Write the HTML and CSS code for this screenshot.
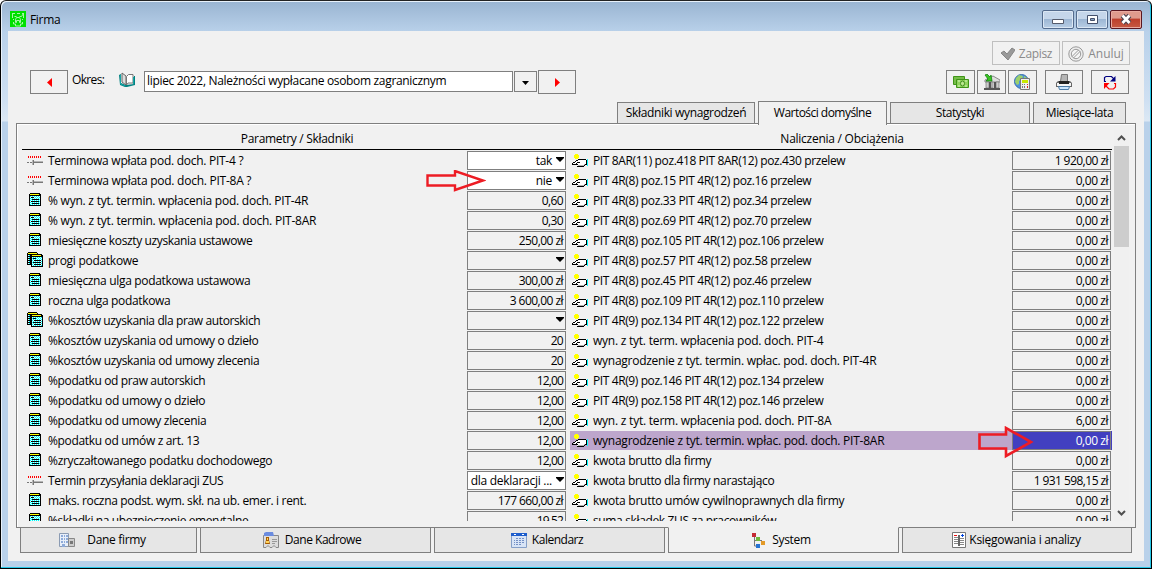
FILE: index.html
```html
<!DOCTYPE html>
<html lang="pl">
<head>
<meta charset="utf-8">
<title>Firma</title>
<link rel="stylesheet" href="styles.css">
</head>
<body>
<svg class="defs" width="0" height="0">
  <defs>
    <pattern id="dots" width="2" height="2" patternUnits="userSpaceOnUse"><path fill="#0ff" d="M0 0h2v2H0z"/><path fill="#d8ffff" d="M0 0h1v1H0zM1 1h1v1H1z"/></pattern>
    <symbol id="i-switch" viewBox="0 0 16 16"><path fill="#f00" d="M1 4h1v2H1zM3 4h1v2H3zM5 4h1v2H5zM7 4h1v2H7zM9 4h1v2H9zM11 4h1v2h-1zM13 4h1v2h-1z"/><path fill="#777" d="M0 10h2v1H0zM3 10h2v1H3zM6 8h1v5H6zM7 10h9v1H7z"/><path fill="#b5b5b5" d="M5 8h1v5H5zM7 9h9v1H7z"/></symbol>
    <symbol id="i-note" viewBox="0 0 16 16"><path d="M3 1h10v1h1v12H2V2h1z"/><path fill="#ff0" d="M3 2h9v1H3z"/><path fill="url(#dots)" d="M3 4h10v9H3z"/><path d="M4 5h3v1H4zM5 7h7v1H5zM4 9h8v1H4zM5 11h7v1H5z"/></symbol>
    <symbol id="i-notes" viewBox="0 0 16 16"><path d="M1 0h9l1 2h4l1 2v11H4v-2H0V1z"/><path fill="#ff0" d="M1 1h9v1H1zM5 3h9v1H5z"/><path fill="url(#dots)" d="M1 3h2v9H1zM5 5h10v9H5z"/><path d="M1 4h2v1H1zM1 6h2v1H1zM1 8h2v1H1zM1 10h2v1H1zM6 6h3v1H6zM7 8h7v1H7zM6 10h8v1H6zM7 12h7v1H7z"/></symbol>
    <symbol id="i-hand" viewBox="0 0 16 16"><path fill="#ff0" d="M3 2h3v1h1v3H6v1H3V6H2V3h1z"/><path fill="#fff" d="M6 8h8v4l-2 2H5v-1H1v-1l4-4z"/><path d="M6 7h8v1H6zM4 8h2v1H4zM3 9h1v1H3zM1 10h2v1H1zM0 11h1v2H0zM1 12h5v1H1zM5 10h3v1H5zM4 11h1v1H4zM5 14h7v1H5zM12 13h1v1h-1zM13 12h1v1h-1zM14 8h1v5h-1z"/><path fill="#b0b0b0" d="M6 13h6v1H6zM12 12h1v1h-1z"/><path fill="#0ff" d="M15 7h1v7h-1z"/></symbol>
  </defs>
</svg>

<div class="window">
  <header class="titlebar">
    <svg class="app-icon" width="16" height="16" viewBox="0 0 16 16"><path fill="#00e000" d="M0 0h16v16H0z"/><g fill="none" stroke="#a8f5a8"><path d="M2 2.500h3M7 2.500h3M12 2.500h2M2.500 3v4M13.500 3v4M4.500 5.500h2M9.500 5.500h2l2-3M5.500 8.500l1-2h3l1 2v3h-1v-2h-3v2h-1zM3 8.500h1M12 8.500h1M3.500 11v2h2v2h5v-2h2v-2"/></g></svg>
    <span class="title" data-width="30">Firma</span>
    <div class="win-buttons">
      <i class="win"><svg width="30" height="17"><path d="M9.500 8.500h11v4h-11z" fill="#fff" stroke="#555b6b"/></svg></i>
      <i class="win"><svg width="30" height="17"><path d="M10.500 4.500h10v8h-10z" fill="#fff" stroke="#44506b"/><path d="M13.500 7.500h4v2h-4z" fill="#8aa3c4" stroke="#44506b"/></svg></i>
      <i class="win close"><svg width="30" height="17"><path d="M11.500 4.500l7 7.500M18.500 4.500l-7 7.500" stroke="#4c4450" stroke-width="5"/><path d="M11.500 4.500l7 7.500M18.500 4.500l-7 7.500" stroke="#fff" stroke-width="2.700"/></svg></i>
    </div>
  </header>

  <main class="client">
    <div class="actions">
      <button class="btn disabled"><svg width="15" height="14"><path d="M1 6l3-2 3 3 5-6 3 2-7 10z" fill="#999" stroke="#858585"/></svg><span data-width="33">Zapisz</span></button>
      <button class="btn disabled"><svg width="16" height="16"><circle cx="8" cy="8" r="7.200" fill="#eee" stroke="#999"/><circle cx="8" cy="8" r="4.700" fill="#f5f5f5" stroke="#999"/><path d="M4 10.500L10.500 4M5.500 12L12 5.500" stroke="#999"/></svg><span data-width="35">Anuluj</span></button>
    </div>

    <div class="toolbar">
      <button class="btn"><svg width="5" height="9"><path d="M5 0v9L0 4.500z" fill="#f00"/></svg></button>
      <label class="period" data-width="32">Okres:</label>
      <svg class="book" width="16" height="16" viewBox="0 0 16 16"><path d="M0 3l2-1v9l5 2 8-1V4h1v9l-8 2H6L1 13z" fill="#008080"/><path d="M3 1l4 3v9l-4-3z" fill="#ddd" stroke="#666"/><path d="M7.500 4.500l2-2h4.500v8.500H9l-1.500 2z" fill="#fff" stroke="#777"/><path d="M1.500 3v9l5 2M14.500 5v7" fill="none" stroke="#15a5a5"/></svg>
      <div class="combo"><span data-width="299">lipiec 2022, Należności wypłacane osobom zagranicznym</span></div>
      <button class="btn drop"><svg width="7" height="4"><path d="M0 0h7L3.500 4z"/></svg></button>
      <button class="btn"><svg width="5" height="9"><path d="M0 0v9l5-4.500z" fill="#f00"/></svg></button>
      <div class="tools">
        <button class="btn sq"><svg width="16" height="14" viewBox="0 0 16 14"><path d="M.5 1.500h11v8H.5z" fill="#75bd48" stroke="#3f9418"/><path d="M3.500 4.500h12v8h-12z" fill="#8fd35c" stroke="#3f9418"/><path d="M5 6h2M12 6h2M5 11h2M12 11h2" stroke="#d8f5bd"/><ellipse cx="9.500" cy="8.500" rx="2" ry="2.500" fill="#bce890" stroke="#438e20"/></svg></button>
        <button class="btn sq"><svg width="16" height="16" viewBox="0 0 16 16"><path d="M1 6l8-4 7 4v2H1z" fill="#ddd" stroke="#888"/><path d="M2 8h3v6H2zM7 8h2v6H7zM12 8h3v6h-3z" fill="#ccc" stroke="#777" stroke-width=".7"/><path d="M5 8h2v6H5zM10 8h2v6h-2zM0 14h16v2H0z" fill="#555"/><path d="M1 1l2-1 3 3 1-2 1 6H2l2-2z" fill="#39c422" stroke="#138010" stroke-width=".8"/></svg></button>
        <button class="btn sq"><svg width="17" height="16" viewBox="0 0 17 16"><circle cx="7.500" cy="7.500" r="7" fill="#4e91dc" stroke="#356caf"/><path d="M2 4l3-3 4 1-1 3-3 2v3l-2 1-2-3zM10 2l3 2-3 1z" fill="#9bd06b"/><path d="M6.500 4.500h9v11h-9z" fill="#eee" stroke="#777"/><path d="M8 6h6v3H8z" fill="#c9e800"/><path d="M8 10h1v1H8zM10 10h1v1h-1zM8 12h1v2H8zM10 12h1v2h-1z" fill="#777"/><path d="M13 10h1v1h-1zM13 12h1v2h-1z" fill="#d22"/></svg></button>
        <button class="btn print"><svg width="16" height="16" viewBox="0 0 16 16"><path d="M5.500.5h6v7h-7z" fill="#b5b5b5" stroke="#777"/><path d="M2 7h12l2 2v4H0V9z" fill="#666"/><path d="M1 9h14v3H1z" fill="#f5f5f5"/><path d="M3 7h10v3H3z" fill="#222"/><path d="M2.500 12.500h11l-1 3h-9z" fill="#cce7ff" stroke="#4c7ba6"/></svg></button>
        <button class="btn refresh"><svg width="14" height="15" viewBox="0 0 14 15" fill="none"><path d="M3 6.500H1.500v-4l1.500-1h5.500l3 3" stroke="#000080" stroke-width="1.200"/><path d="M12.500 1v5.500H7z" fill="#000080"/><path d="M11 8.500h1.500v3.500l-2 2H6l-3-3" stroke="#f00" stroke-width="1.200"/><path d="M1 14V8h5.500z" fill="#f00"/></svg></button>
      </div>
    </div>

    <nav class="tabs">
      <div class="tab t-pay"><span data-width="120">Składniki wynagrodzeń</span></div>
      <div class="tab t-defaults active"><span data-width="97">Wartości domyślne</span></div>
      <div class="tab t-stats"><span data-width="48">Statystyki</span></div>
      <div class="tab t-months"><span data-width="67">Miesiące-lata</span></div>
    </nav>

    <section class="panel">
      <div class="sheet">
        <div class="heads"><div class="head-left"><span data-width="112">Parametry / Składniki</span></div><div class="head-right"><span data-width="123">Naliczenia / Obciążenia</span></div></div>
        <div class="columns">
          <div class="list" id="parameters"></div>
          <div class="list right" id="charges"></div>
        </div>
      </div>
      <div class="scrollbar">
        <svg width="9" height="6"><path d="M1 5l3.500-3.500L8 5" fill="none" stroke="#505050" stroke-width="2"/></svg>
        <div class="thumb"></div>
        <svg width="9" height="6"><path d="M1 1l3.500 3.500L8 1" fill="none" stroke="#505050" stroke-width="2"/></svg>
      </div>
    </section>

    <nav class="bottom">
      <div class="tab b-first"><svg width="16" height="14" viewBox="0 0 16 14"><path d="M.5.5h9v13h-9z" fill="#e8eff9" stroke="#8b9bb3"/><path d="M2 2h2v2H2zM5 2h1v2H5zM7 2h2v2H7zM2 5h2v2H2zM5 5h1v2H5zM7 5h2v2H7zM2 8h2v2H2zM5 8h1v2H5zM7 8h2v2H7zM3 11h3v3H3z" fill="#8eabd9"/><path d="M9.500 5.500h6v8h-6z" fill="#ccc" stroke="#888"/><path d="M11 8h3v3h-3z" fill="#777"/></svg><span data-width="58">Dane firmy</span></div>
      <div class="tab b-staff"><svg width="16" height="16" viewBox="0 0 16 16"><path d="M.5 3.500h15v12H13l-2-2-2 2H7l-2-2-2 2H.5z" fill="#ddd" stroke="#888"/><path d="M1 1l2-1h7l1 4H1z" fill="#6b8cdf"/><path d="M3 5h3v3l1 4H2l1-4z" fill="#a75b00"/><path d="M4 6h1v2H4zM3 9h3v2H3z" fill="#ffd45a"/><path d="M9 7.500h5M9 9.500h5M9 11.500h3" stroke="#999"/></svg><span data-width="76">Dane Kadrowe</span></div>
      <div class="tab b-cal"><svg width="16" height="15" viewBox="0 0 16 15"><path d="M.5.5h15v14H.5z" fill="#d8e4f6" stroke="#859fc8"/><path d="M0 0h16v3H0z" fill="#1d5dcc"/><path d="M3 1h2v1H3zM11 1h2v1h-2z" fill="#fff"/><path d="M5 5h2v1H5zM8 5h2v1H8zM11 5h2v1h-2zM3 7h1v1H3zM5 7h2v1H5zM8 7h2v1H8zM11 7h2v1h-2zM3 9h1v1H3zM5 9h2v1H5zM8 9h2v1H8zM11 9h2v1h-2zM3 11h1v1H3zM5 11h2v1H5zM8 11h2v1H8z" fill="#7490c5"/></svg><span data-width="51">Kalendarz</span></div>
      <div class="tab b-system active"><svg width="13" height="15" viewBox="0 0 13 15"><path d="M2.500 4v9H5M3 7.500h7" fill="none" stroke="#777"/><path d="M0 0h4v4H0z" fill="#c52b35"/><path d="M4 4h4v4H4z" fill="#70b83c"/><path d="M9 8h4v4H9z" fill="#e39a28"/><path d="M4 11h4v4H4z" fill="#2673d2"/></svg><span data-width="38">System</span></div>
      <div class="tab b-books"><svg width="14" height="16" viewBox="0 0 14 16"><path d="M.5.500h13v15H.5z" fill="#fff" stroke="#777"/><path d="M2 5.500h4M2 7.500h4M2 9.500h4M2 11.500h4M8 6.500h4M8 8.500h4M8 10.500h4M8 12.500h4" stroke="#888"/><path d="M6 3h2v11H6z" fill="#666"/><path d="M2 3h3v1H2z" fill="#e11"/><path d="M9 3h3v1H9zM10 2h1v3h-1z" fill="#04d"/></svg><span data-width="111">Księgowania i analizy</span></div>
    </nav>
  </main>

  <svg class="callout first" width="60" height="24"><path d="M1.500 5.500H29V1l28 9.500L29 20v-4.500H1.500z" fill="none" stroke="#ed1c24" stroke-width="2.400"/></svg>
  <svg class="callout second" width="58" height="34"><path d="M1.500 8.500H28V2l25 14-25 14v-7.500H1.500z" fill="none" stroke="#ed1c24" stroke-width="2.600"/></svg>
</div>
<script src="script.js"></script>
</body>
</html>
```

FILE: styles.css
```css
* { box-sizing: border-box; }
body { margin: 0; background: #fff; font: 12px/16px "Open Sans", "Noto Sans", sans-serif; color: #000; overflow: hidden; }
.defs { position: absolute; }
svg { display: block; flex: none; }
span { white-space: nowrap; }
.window { position: relative; width: 1152px; height: 569px; border: 1px solid #000; border-top-color: #222; border-radius: 6px 6px 0 0; background: linear-gradient(#99b4d1, #b9d1ea 31px, #cfe0f2 100px, #dce8f4 120px, #b9d1ea 121px); box-shadow: inset -1px -1px #25c8e8, inset 1px 1px #e8f1fa; }
.titlebar { height: 30px; display: flex; align-items: flex-start; padding: 9px 9px 0; }
.app-icon { margin-top: 1px; }
.title { margin: 2px 0 0 4px; }
.win-buttons { display: flex; gap: 2px; margin-left: auto; }
.win { width: 32px; height: 19px; border: 1px solid #536b8d; border-radius: 2px; box-shadow: inset 0 0 0 1px #dbe7f4; background: linear-gradient(#c5d6ea 48%, #9db7d4 50%, #b8cee5); }
.win.close { border-color: #5a1720; box-shadow: inset 0 0 0 1px #e9aaa0; background: linear-gradient(#df9b8d 40%, #bd402d 50%, #c65a43); }
.client { width: 1136px; height: 530px; margin-left: 7px; background: #f1f1f1; }
.actions { height: 39px; padding: 10px 14px 0 0; display: flex; justify-content: flex-end; gap: 2px; }
.btn { width: 38px; height: 24px; padding: 0; flex: none; border: 1px solid #7f7f7f; background: #f1f1f1; font: inherit; display: flex; align-items: center; justify-content: center; }
.btn.disabled { width: 68px; padding-top: 2px; border-color: #bfbfbf; color: #8a8a8a; gap: 4px; }
.toolbar { height: 32px; display: flex; align-items: flex-start; padding: 0 15px 0 22px; }
.period { margin: 2px 0 0 4px; width: 51px; white-space: nowrap; }
.book { margin: 2px 9px 0 -4px; }
.combo { width: 369px; height: 21px; margin: 1px 1px 0 0; border: 1px solid #7f7f7f; background: #fff; padding: 1px 2px; }
.btn.drop { width: 23px; height: 21px; margin: 1px 1px 0 0; padding-top: 3px; }
.tools { margin-left: auto; display: flex; gap: 2px; }
.btn.sq { width: 29px; }
.btn.print { margin-left: 6px; }
.btn.refresh { margin-left: 6px; }
.tabs { height: 21px; display: flex; align-items: flex-end; gap: 3px; padding-left: 609px; }
.tab { border: 1px solid #7f7f7f; background: #e6e6e6; display: flex; justify-content: center; align-items: center; }
.tabs .tab { height: 21px; border-bottom: 0; }
.tabs .active { height: 24px; margin-bottom: -2px; padding-bottom: 1px; background: #f1f1f1; z-index: 1; }
.t-pay { width: 138px; } .t-defaults { width: 129px; } .t-stats { width: 140px; } .t-months { width: 93px; }
.panel { width: 1120px; height: 405px; margin-left: 8px; border: 1px solid #7f7f7f; box-shadow: inset 1px 1px #fff; display: flex; padding: 6px 6px 6px 5px; }
.sheet { width: 1090px; height: 391px; overflow: hidden; }
.heads { height: 20px; padding-top: 1px; border-bottom: 1px solid #000; display: flex; }
.head-left { width: 550px; display: flex; justify-content: center; }
.head-right { flex: 1; display: flex; justify-content: center; }
.columns { display: flex; justify-content: space-between; }
.list { width: 544px; padding-top: 1px; }
.list.right { width: 542px; }
.row { height: 20px; display: flex; align-items: flex-start; padding-left: 5px; }
.right .row { padding-left: 2px; }
.icon { width: 16px; height: 16px; margin: 1px 5px 0 0; shape-rendering: crispEdges; }
.name { flex: 1; height: 19px; padding-top: 2px; white-space: nowrap; }
.value { width: 99px; height: 19px; border: 1px solid #7f7f7f; display: flex; align-items: center; justify-content: flex-end; padding: 0 2px 0 1px; }
.right .value { margin-right: 1px; }
.value.edit { background: #fff; }
.value.edit, .value.menu { padding-right: 1px; }
.caret { margin: -2px 0 0 4px; }
.row.selected { height: 19px; margin-bottom: 1px; background: #bda6cc; }
.row.selected .value { background: #423fc0; color: #fff; box-shadow: 1px 0 #423fc0; }
.scrollbar { width: 15px; margin-left: 2px; background: #f0f0f0; display: flex; flex-direction: column; align-items: center; padding-top: 5px; }
.thumb { width: 15px; height: 101px; background: #cdcdcd; margin: 5px 0 263px; }
.bottom { height: 26px; display: flex; gap: 3px; margin: -1px 0 0 12px; }
.bottom .tab { height: 26px; }
.bottom .active { border-top-color: #f1f1f1; background: #f1f1f1; }
.bottom .b-first { width: 177px; gap: 12px; padding-right: 12px; }
.bottom .b-staff { width: 231px; gap: 6px; padding-right: 7px; }
.bottom .b-cal { width: 231px; gap: 5px; padding-right: 5px; }
.bottom .b-system { width: 231px; gap: 7px; padding-right: 4px; }
.bottom .b-books { width: 230px; gap: 3px; padding-right: 1px; }
.callout { position: absolute; }
.callout.first { left: 425px; top: 169px; }
.callout.second { left: 977px; top: 425px; }
```

FILE: script.js
```js
// icon, label, label width, value
const parameters = [
  ["switch", "Terminowa wpłata pod. doch. PIT-4 ?", 195, "tak", "edit"],
  ["switch", "Terminowa wpłata pod. doch. PIT-8A ?", 203, "nie", "edit"],
  ["note", "% wyn. z tyt. termin. wpłacenia pod. doch. PIT-4R", 260, "0,60"],
  ["note", "% wyn. z tyt. termin. wpłacenia pod. doch. PIT-8AR", 268, "0,30"],
  ["note", "miesięczne koszty uzyskania ustawowe", 204, "250,00 zł"],
  ["notes", "progi podatkowe", 90, "", "menu"],
  ["note", "miesięczna ulga podatkowa ustawowa", 202, "300,00 zł"],
  ["note", "roczna ulga podatkowa", 122, "3 600,00 zł"],
  ["notes", "%kosztów uzyskania dla praw autorskich", 212, "", "menu"],
  ["note", "%kosztów uzyskania od umowy o dzieło", 210, "20"],
  ["note", "%kosztów uzyskania od umowy zlecenia", 211, "20"],
  ["note", "%podatku od praw autorskich", 157, "12,00"],
  ["note", "%podatku od umowy o dzieło", 157, "12,00"],
  ["note", "%podatku od umowy zlecenia", 158, "12,00"],
  ["note", "%podatku od umów z art. 13", 151, "12,00"],
  ["note", "%zryczałtowanego podatku dochodowego", 224, "12,00"],
  ["switch", "Termin przysyłania deklaracji ZUS", 175, "dla deklaracji ...", "edit"],
  ["note", "maks. roczna podst. wym. skł. na ub. emer. i rent.", 258, "177 660,00 zł"],
  ["note", "%składki na ubezpieczenie emerytalne", 200, "19,52"]
];
const charges = [
  ["PIT 8AR(11) poz.418 PIT 8AR(12) poz.430 przelew", 252, "1 920,00 zł"],
  ["PIT 4R(8) poz.15 PIT 4R(12) poz.16 przelew", 218, "0,00 zł"],
  ["PIT 4R(8) poz.33 PIT 4R(12) poz.34 przelew", 218, "0,00 zł"],
  ["PIT 4R(8) poz.69 PIT 4R(12) poz.70 przelew", 218, "0,00 zł"],
  ["PIT 4R(8) poz.105 PIT 4R(12) poz.106 przelew", 230, "0,00 zł"],
  ["PIT 4R(8) poz.57 PIT 4R(12) poz.58 przelew", 218, "0,00 zł"],
  ["PIT 4R(8) poz.45 PIT 4R(12) poz.46 przelew", 218, "0,00 zł"],
  ["PIT 4R(8) poz.109 PIT 4R(12) poz.110 przelew", 230, "0,00 zł"],
  ["PIT 4R(9) poz.134 PIT 4R(12) poz.122 przelew", 230, "0,00 zł"],
  ["wyn. z tyt. term. wpłacenia pod. doch. PIT-4", 230, "0,00 zł"],
  ["wynagrodzenie z tyt. termin. wpłac. pod. doch. PIT-4R", 283, "0,00 zł"],
  ["PIT 4R(9) poz.146 PIT 4R(12) poz.134 przelew", 230, "0,00 zł"],
  ["PIT 4R(9) poz.158 PIT 4R(12) poz.146 przelew", 230, "0,00 zł"],
  ["wyn. z tyt. term. wpłacenia pod. doch. PIT-8A", 238, "6,00 zł"],
  ["wynagrodzenie z tyt. termin. wpłac. pod. doch. PIT-8AR", 291, "0,00 zł", "selected"],
  ["kwota brutto dla firmy", 118, "0,00 zł"],
  ["kwota brutto dla firmy narastająco", 181, "1 931 598,15 zł"],
  ["kwota brutto umów cywilnoprawnych dla firmy", 251, "0,00 zł"],
  ["suma składek ZUS za pracowników", 183, "0,00 zł"]
].map(([label, width, value, state]) => ["hand", label, width, value, state]);

const valueWidths = {
  "tak": 16, "nie": 16, "20": 12, "0,60": 21, "0,30": 21, "12,00": 26, "19,52": 26,
  "0,00 zł": 32, "6,00 zł": 32, "250,00 zł": 44, "300,00 zł": 44, "1 920,00 zł": 53,
  "3 600,00 zł": 53, "177 660,00 zł": 65, "1 931 598,15 zł": 74, "dla deklaracji ...": 81
};
const caret = '<svg class="caret" width="8" height="5"><path d="M0 0h8v1L4 5 0 1z"/></svg>';

function render(id, rows) {
  document.getElementById(id).innerHTML = rows.map(([icon, label, width, value, state = ""]) => `
    <div class="row ${state}">
      <svg class="icon"><use href="#i-${icon}"/></svg>
      <div class="name"><span data-width="${width}">${label}</span></div>
      <div class="value ${state === "edit" || state === "menu" ? state : ""}">${value ? `<span data-width="${valueWidths[value]}">${value}</span>` : ""}${state === "edit" || state === "menu" ? caret : ""}</div>
    </div>`).join("");
}
render("parameters", parameters);
render("charges", charges);

document.querySelectorAll("[data-width]").forEach(el => {
  const range = document.createRange();
  range.selectNodeContents(el);
  const natural = range.getBoundingClientRect().width;
  el.style.letterSpacing = (Number(el.dataset.width) + 0.3 - natural) / el.textContent.length + "px";
});
```
